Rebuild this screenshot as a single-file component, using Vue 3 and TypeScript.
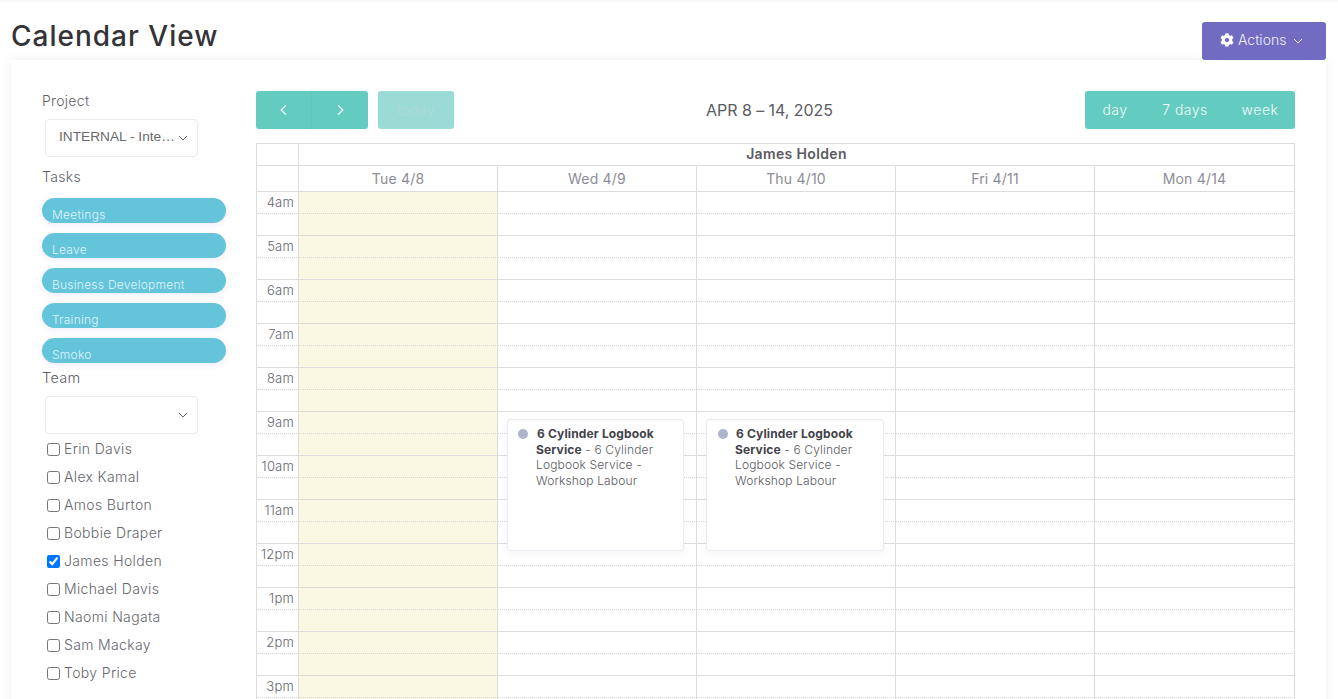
<script setup lang="ts">
const tasks: string[] = ['Meetings', 'Leave', 'Business Development', 'Training', 'Smoko']
const team: { name: string; on: boolean }[] = [
  { name: 'Erin Davis', on: false },
  { name: 'Alex Kamal', on: false },
  { name: 'Amos Burton', on: false },
  { name: 'Bobbie Draper', on: false },
  { name: 'James Holden', on: true },
  { name: 'Michael Davis', on: false },
  { name: 'Naomi Nagata', on: false },
  { name: 'Sam Mackay', on: false },
  { name: 'Toby Price', on: false },
]
const days: string[] = ['Tue 4/8', 'Wed 4/9', 'Thu 4/10', 'Fri 4/11', 'Mon 4/14']
const hours: string[] = ['4am', '5am', '6am', '7am', '8am', '9am', '10am', '11am', '12pm', '1pm', '2pm', '3pm']
const columns: number[] = [0, 1, 2, 3, 4]
</script>

<template>
  <div class="page">
    <div class="topline"></div>
    <header class="head">
      <h1 class="title">Calendar View</h1>
      <button class="actions">
        <svg class="gear" viewBox="0 0 512 512"><path fill="currentColor" d="M487.4 315.7l-42.6-24.6c4.3-23.2 4.3-47 0-70.2l42.6-24.6c4.9-2.8 7.1-8.6 5.5-14-11.1-35.6-30-67.8-54.7-94.6-3.8-4.1-10-5.1-14.8-2.3L380.8 110c-17.9-15.4-38.5-27.3-60.8-35.1V25.8c0-5.6-3.9-10.5-9.4-11.7-36.7-8.2-74.3-7.8-109.2 0-5.5 1.2-9.4 6.1-9.4 11.7V75c-22.2 7.9-42.8 19.8-60.8 35.1L88.7 85.5c-4.9-2.8-11-1.9-14.8 2.3-24.7 26.7-43.6 58.9-54.7 94.6-1.7 5.4.6 11.2 5.5 14L67.3 221c-4.3 23.2-4.3 47 0 70.2l-42.6 24.6c-4.9 2.8-7.1 8.6-5.5 14 11.1 35.6 30 67.8 54.7 94.6 3.8 4.1 10 5.1 14.8 2.3l42.6-24.6c17.9 15.4 38.5 27.3 60.8 35.1v49.2c0 5.6 3.9 10.5 9.4 11.7 36.7 8.2 74.3 7.8 109.2 0 5.5-1.2 9.4-6.1 9.4-11.7v-49.2c22.2-7.9 42.8-19.8 60.8-35.1l42.6 24.6c4.9 2.8 11 1.9 14.8-2.3 24.7-26.7 43.6-58.9 54.7-94.6 1.5-5.5-.7-11.3-5.6-14.1zM256 336c-44.1 0-80-35.9-80-80s35.9-80 80-80 80 35.9 80 80-35.9 80-80 80z"/></svg>
        <span>Actions</span>
        <svg class="caret" viewBox="0 0 10 6"><polyline points="1,1 5,5 9,1" /></svg>
      </button>
    </header>

    <main class="card">
      <aside class="side">
        <div class="label first">Project</div>
        <div class="select">
          <span class="select-text">INTERNAL - Internal Project</span>
          <svg class="select-caret" viewBox="0 0 10 6"><polyline points="1,1 5,5 9,1" /></svg>
        </div>
        <div class="label tasks">Tasks</div>
        <div class="pills">
          <div v-for="t in tasks" :key="t" class="pill">{{ t }}</div>
        </div>
        <div class="label team">Team</div>
        <div class="select">
          <span class="select-text"></span>
          <svg class="select-caret" viewBox="0 0 10 6"><polyline points="1,1 5,5 9,1" /></svg>
        </div>
        <ul class="members">
          <li v-for="m in team" :key="m.name" class="member">
            <input type="checkbox" class="check" :checked="m.on" />
            <span>{{ m.name }}</span>
          </li>
        </ul>
      </aside>

      <section class="cal">
        <div class="toolbar">
          <div class="tool-left">
            <div class="btn-group">
              <button class="btn nav nav-prev">
                <svg viewBox="0 0 6 10"><polyline points="5,1 1,5 5,9" /></svg>
              </button>
              <button class="btn nav nav-next">
                <svg viewBox="0 0 6 10"><polyline points="1,1 5,5 1,9" /></svg>
              </button>
            </div>
            <button class="btn btn-today">today</button>
          </div>
          <h2 class="range">APR 8 – 14, 2025</h2>
          <div class="btn-group">
            <button class="btn view v-day">day</button>
            <button class="btn view v-seven">7 days</button>
            <button class="btn view v-week">week</button>
          </div>
        </div>

        <div class="grid">
          <div class="row res-row">
            <div class="cell axis"></div>
            <div class="cell res">James Holden</div>
          </div>
          <div class="row day-row">
            <div class="cell axis"></div>
            <div v-for="d in days" :key="d" class="cell day">{{ d }}</div>
          </div>
          <div class="body">
            <template v-for="h in hours" :key="h">
              <div class="row slot dotted">
                <div class="cell axis time">{{ h }}</div>
                <div v-for="c in columns" :key="c" class="cell" :class="{ 'is-today': c === 0 }"></div>
              </div>
              <div class="row slot">
                <div class="cell axis"></div>
                <div v-for="c in columns" :key="c" class="cell" :class="{ 'is-today': c === 0 }"></div>
              </div>
            </template>
            <article class="event ev-a">
              <i class="dot"></i>
              <b class="ev-first">6 Cylinder Logbook</b><br /><b>Service</b> - 6 Cylinder<br />Logbook Service -<br />Workshop Labour
            </article>
            <article class="event ev-b">
              <i class="dot"></i>
              <b class="ev-first">6 Cylinder Logbook</b><br /><b>Service</b> - 6 Cylinder<br />Logbook Service -<br />Workshop Labour
            </article>
          </div>
        </div>
      </section>
    </main>
  </div>
</template>

<style>
html, body { margin: 0; background: #fff; overflow: hidden; }
</style>

<style scoped>
.page {
  height: 699px;
  overflow: hidden;
  font-family: Inter, "Liberation Sans", sans-serif;
  font-weight: 300;
  color: #5f5f68;
  box-sizing: border-box;
}
.topline { height: 2px; background: #f8f8fa; }
.head {
  height: 58px;
  box-sizing: border-box;
  padding: 0 12px 0 11px;
  display: flex;
  justify-content: space-between;
  align-items: flex-end;
}
.title {
  margin: 0 0 4px;
  font-size: 28px;
  line-height: 40px;
  font-weight: 500;
  color: #333338;
  letter-spacing: 1px;
}
.actions {
  width: 124px;
  height: 38px;
  border: 0;
  border-radius: 3px;
  background: #716bc1;
  color: #f1f0fa;
  font: 300 14px/38px Inter, sans-serif;
  letter-spacing: 0;
  display: flex;
  align-items: center;
  padding: 0 0 2px 18px;
  gap: 4px;
}
.gear { width: 14px; height: 14px; color: #fff; }
.caret { width: 10px; height: 6px; margin-left: 3px; margin-top: 2px; fill: none; stroke: #e8e7f6; stroke-width: 1; }

.card {
  margin: 0 12px 0 11px;
  height: 660px;
  box-sizing: border-box;
  padding: 31px 31px 0;
  background: #fff;
  box-shadow: 0 0 10px rgba(82, 63, 160, 0.09);
  display: flex;
  gap: 30px;
}
.side { width: 184px; flex: none; }
.label { font-size: 14px; line-height: 20px; letter-spacing: 0.3px; color: #5f5f68; }
.label.first { height: 28px; margin-top: 0; }
.label.tasks { margin-top: 10px; height: 31px; }
.label.team { margin-top: 5px; height: 28px; font-size: 14.5px; }
.select {
  margin-left: 3px;
  width: 153px;
  height: 38px;
  box-sizing: border-box;
  border: 1px solid #ebebef;
  border-radius: 4px;
  display: flex;
  align-items: center;
  padding: 0 9px 0 13px;
  gap: 2px;
}
.select-text {
  flex: 1;
  min-width: 0;
  font: 400 13.7px/18px "Liberation Sans", Arial, sans-serif;
  color: #6a6a6a;
  white-space: nowrap;
  overflow: hidden;
  text-overflow: ellipsis;
  margin-top: -2px;
}
.select-caret { width: 10px; height: 6px; flex: none; fill: none; stroke: #666; stroke-width: 1; }
.pills { display: flex; flex-direction: column; gap: 10px; }
.pill {
  height: 25px;
  box-sizing: border-box;
  border-radius: 13px;
  background: #64c4da;
  color: #dff5fa;
  font-size: 12px;
  line-height: 16px;
  letter-spacing: 0.25px;
  padding: 9px 0 0 10px;
  overflow: hidden;
  white-space: nowrap;
  box-shadow: 0 2px 6px rgba(100, 100, 220, 0.12);
}
.members { list-style: none; margin: 0 0 0 5px; padding: 0; }
.member {
  height: 28px;
  display: flex;
  align-items: center;
  font-size: 14px;
  letter-spacing: 0.35px;
  color: #66666e;
}
.check { width: 13px; height: 13px; margin: 2px 4px 0 0; flex: none; }

.cal { width: 1039px; flex: none; }
.toolbar {
  height: 38px;
  margin-bottom: 14px;
  display: flex;
  justify-content: space-between;
  align-items: center;
}
.tool-left { display: flex; gap: 10px; }
.btn-group { display: flex; border-radius: 3px; overflow: hidden; }
.btn {
  height: 38px;
  border: 0;
  padding: 0;
  background: #64cbc1;
  color: #f0fbf9;
  font: 300 14px/38px Inter, sans-serif;
  letter-spacing: 0.5px;
}
.btn.nav { display: flex; align-items: center; justify-content: center; }
.nav-prev { width: 55px; }
.nav-next { width: 57px; border-left: 1px solid #60c6bc; }
.btn.nav svg { width: 7px; height: 12px; fill: none; stroke: #fff; stroke-width: 1; }
.btn-today { width: 76px; border-radius: 3px; background: #9adcd5; color: #b3d9d8; }
.range {
  margin: 0;
  font-size: 16px;
  font-weight: 400;
  color: #5b5b63;
  letter-spacing: -0.05px;
}
.v-day { width: 60px; }
.v-seven { width: 80px; }
.v-week { width: 70px; }

.grid { border-top: 1px solid #ddd; border-left: 1px solid #ddd; box-sizing: border-box; }
.row { display: grid; grid-template-columns: 42px repeat(4, 199px) 200px; }
.cell { border-right: 1px solid #ddd; border-bottom: 1px solid #ddd; box-sizing: border-box; min-width: 0; }
.res-row { height: 22px; }
.res {
  grid-column: 2 / 7;
  text-align: center;
  font-size: 14px;
  line-height: 20px;
  font-weight: 600;
  color: #5a5a62;
  letter-spacing: 0.35px;
}
.day-row { height: 26px; }
.day {
  text-align: center;
  font-size: 14px;
  line-height: 25px;
  font-weight: 400;
  color: #8c8c96;
  letter-spacing: 0.2px;
}
.body { position: relative; }
.slot { height: 22px; }
.slot.dotted .cell { border-bottom: 1px dotted #d4d4d4; }
.time {
  text-align: right;
  font-size: 13px;
  line-height: 21px;
  padding-right: 4px;
  letter-spacing: 0.2px;
  color: #666670;
}
.cell.is-today { background: #faf7e3; }
.event {
  position: absolute;
  top: 227px;
  height: 132px;
  box-sizing: border-box;
  padding: 6px 0 0 28px;
  background: #fff;
  border: 1px solid #ebebf2;
  border-radius: 3px;
  box-shadow: 0 3px 8px rgba(90, 90, 160, 0.06);
  font-size: 12px;
  line-height: 15.5px;
  color: #5a5a62;
  letter-spacing: 0.15px;
  white-space: nowrap;
}
.event b { font-weight: 700; color: #43434b; }
.ev-first { margin-left: 1px; }
.ev-a { left: 250px; width: 177px; }
.ev-b { left: 449px; width: 178px; }
.dot {
  position: absolute;
  left: 10px;
  top: 9px;
  width: 10px;
  height: 10px;
  border-radius: 50%;
  background: #adb4cb;
}
.ev-b .dot { left: 11px; }
</style>
